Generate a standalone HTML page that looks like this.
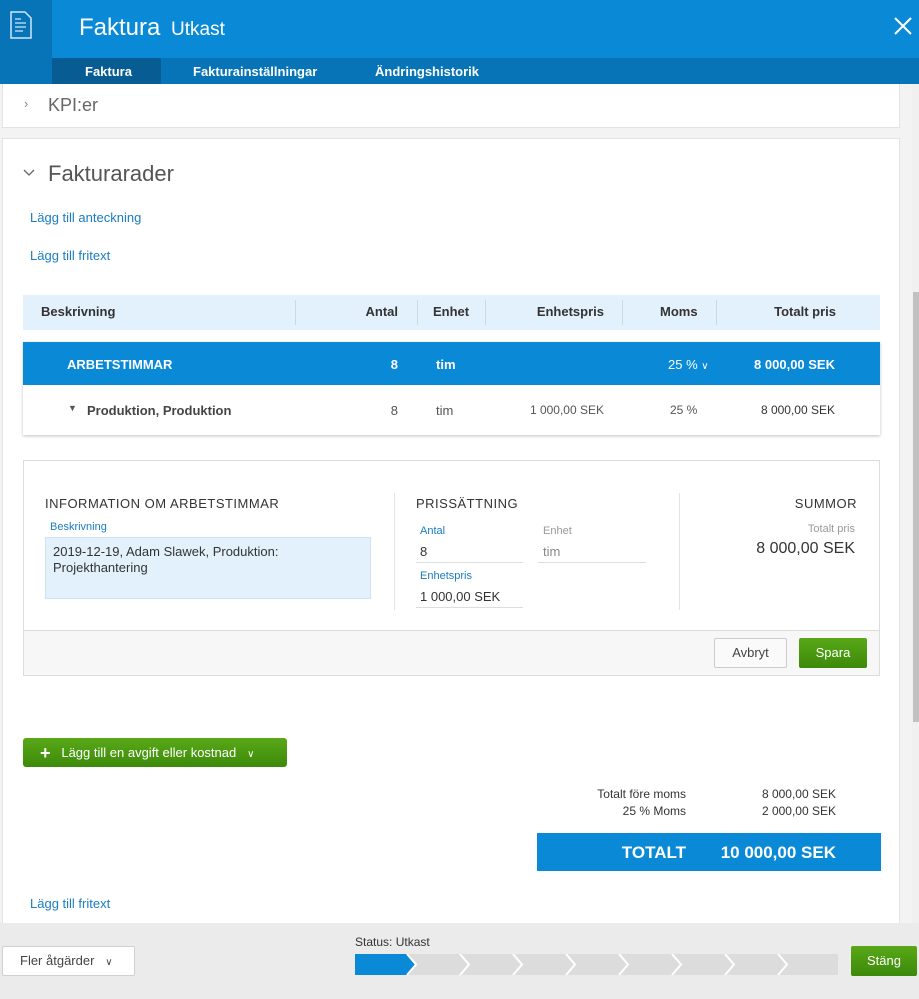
<!DOCTYPE html>
<html><head><meta charset="utf-8"><style>
*{box-sizing:border-box;margin:0;padding:0}
body{width:919px;height:999px;overflow:hidden;background:#f3f3f3;font-family:"Liberation Sans",sans-serif;color:#333;position:relative}
.a{position:absolute}
.lnk{color:#1a7cc1;font-size:13px}
.r{text-align:right}
.hd{font-size:13px;font-weight:bold;color:#333}
</style></head><body>
<div class="a" style="left:0;top:0;width:919px;height:58px;background:#0a8ad6"></div>
<div class="a" style="left:0;top:0;width:52px;height:84px;background:#0774b8"></div>
<svg class="a" style="left:10px;top:11px" width="22" height="28" viewBox="0 0 22 28"><path d="M1 1h14l6 6v20H1z" fill="none" stroke="#cfe6f7" stroke-width="1.5"/><path d="M5 8h6M5 12h11M5 16h11M5 20h8" stroke="#cfe6f7" stroke-width="1.2"/></svg>
<div class="a" style="left:79px;top:14px;color:#fff;font-size:24px">Faktura <span style="font-size:19px;margin-left:4px">Utkast</span></div>
<svg class="a" style="left:893px;top:16px" width="20" height="20"><path d="M2 2L18 18M18 2L2 18" stroke="#fff" stroke-width="2"/></svg>
<div class="a" style="left:52px;top:58px;width:867px;height:26px;background:#0774b8"></div>
<div class="a" style="left:52px;top:58px;width:109px;height:26px;background:#065c93"></div>
<div class="a" style="left:85px;top:64px;color:#fff;font-size:13px;font-weight:bold">Faktura</div>
<div class="a" style="left:193px;top:64px;color:#fff;font-size:13px;font-weight:bold">Fakturainställningar</div>
<div class="a" style="left:375px;top:64px;color:#fff;font-size:13px;font-weight:bold">Ändringshistorik</div>

<div class="a" style="left:2px;top:84px;width:898px;height:44px;background:#fff;border:1px solid #e3e3e3;border-top:none"></div>
<div class="a" style="left:24px;top:96px;color:#888;font-size:13px">›</div>
<div class="a" style="left:48px;top:95px;color:#666;font-size:18px">KPI:er</div>

<div class="a" style="left:2px;top:138px;width:898px;height:790px;background:#fff;border:1px solid #e3e3e3"></div>
<svg class="a" style="left:23px;top:169px" width="12" height="8"><path d="M1 1l5 5 5-5" fill="none" stroke="#666" stroke-width="1.3"/></svg>
<div class="a" style="left:48px;top:161px;color:#555;font-size:22px">Fakturarader</div>
<div class="a lnk" style="left:30px;top:210px">Lägg till anteckning</div>
<div class="a lnk" style="left:30px;top:248px">Lägg till fritext</div>

<div class="a" style="left:23px;top:295px;width:857px;height:35px;background:#e3f1fc"></div>
<div class="a hd" style="left:41px;top:304px">Beskrivning</div>
<div class="a" style="left:295px;top:300px;width:1px;height:25px;background:#c9dbe8"></div>
<div class="a hd r" style="left:330px;top:304px;width:68px">Antal</div>
<div class="a" style="left:417px;top:300px;width:1px;height:25px;background:#c9dbe8"></div>
<div class="a hd" style="left:433px;top:304px">Enhet</div>
<div class="a" style="left:485px;top:300px;width:1px;height:25px;background:#c9dbe8"></div>
<div class="a hd r" style="left:500px;top:304px;width:104px">Enhetspris</div>
<div class="a" style="left:622px;top:300px;width:1px;height:25px;background:#c9dbe8"></div>
<div class="a hd" style="left:660px;top:304px">Moms</div>
<div class="a" style="left:716px;top:300px;width:1px;height:25px;background:#c9dbe8"></div>
<div class="a hd r" style="left:740px;top:304px;width:96px">Totalt pris</div>

<div class="a" style="left:23px;top:342px;width:857px;height:93px;background:#fff;box-shadow:0 1px 3px rgba(0,0,0,.25)"></div>
<div class="a" style="left:23px;top:342px;width:857px;height:43px;background:#0a8ad6"></div>
<div class="a" style="left:67px;top:357px;color:#fff;font-size:13px;font-weight:bold">ARBETSTIMMAR</div>
<div class="a r" style="left:360px;top:357px;width:38px;color:#fff;font-size:13px;font-weight:bold">8</div>
<div class="a" style="left:436px;top:357px;color:#fff;font-size:13px;font-weight:bold">tim</div>
<div class="a" style="left:668px;top:357px;color:#fff;font-size:13px">25 % <span style="font-size:10px">∨</span></div>
<div class="a r" style="left:720px;top:357px;width:115px;color:#fff;font-size:13px;font-weight:bold">8 000,00 SEK</div>
<div class="a" style="left:68px;top:403px;color:#555;font-size:9px">▼</div>
<div class="a" style="left:87px;top:403px;font-size:13px;font-weight:bold;color:#444">Produktion, Produktion</div>
<div class="a r" style="left:360px;top:403px;width:38px;font-size:13px;color:#555">8</div>
<div class="a" style="left:436px;top:403px;font-size:13px;color:#555">tim</div>
<div class="a r" style="left:500px;top:403px;width:104px;font-size:12px;color:#555">1 000,00 SEK</div>
<div class="a" style="left:670px;top:403px;font-size:12px;color:#555">25 %</div>
<div class="a r" style="left:720px;top:403px;width:115px;font-size:12px;color:#333">8 000,00 SEK</div>

<div class="a" style="left:23px;top:460px;width:857px;height:216px;border:1px solid #dcdcdc;background:#fff"></div>
<div class="a" style="left:24px;top:630px;width:855px;height:45px;background:#f7f7f7;border-top:1px solid #dcdcdc"></div>
<div class="a" style="left:45px;top:496px;font-size:13px;letter-spacing:.5px;color:#333">INFORMATION OM ARBETSTIMMAR</div>
<div class="a lnk" style="left:50px;top:521px;font-size:11px">Beskrivning</div>
<div class="a" style="left:45px;top:537px;width:326px;height:62px;background:#e3f1fc;border:1px solid #cfe3f2;padding:6px 7px;font-size:13px;line-height:16px;color:#333">2019-12-19, Adam Slawek, Produktion: Projekthantering</div>
<div class="a" style="left:394px;top:493px;width:1px;height:117px;background:#e3e3e3"></div>
<div class="a" style="left:416px;top:496px;font-size:13px;letter-spacing:.5px">PRISSÄTTNING</div>
<div class="a lnk" style="left:420px;top:525px;font-size:11px">Antal</div>
<div class="a" style="left:420px;top:544px;font-size:13px">8</div>
<div class="a" style="left:416px;top:562px;width:107px;height:1px;background:#ddd"></div>
<div class="a" style="left:543px;top:525px;font-size:11px;color:#999">Enhet</div>
<div class="a" style="left:543px;top:544px;font-size:13px;color:#888">tim</div>
<div class="a" style="left:538px;top:562px;width:108px;height:1px;background:#ddd"></div>
<div class="a lnk" style="left:420px;top:570px;font-size:11px">Enhetspris</div>
<div class="a" style="left:420px;top:589px;font-size:13px">1 000,00 SEK</div>
<div class="a" style="left:416px;top:607px;width:107px;height:1px;background:#ddd"></div>
<div class="a" style="left:679px;top:493px;width:1px;height:117px;background:#e3e3e3"></div>
<div class="a r" style="left:700px;top:496px;width:157px;font-size:13px;letter-spacing:.5px">SUMMOR</div>
<div class="a r" style="left:700px;top:523px;width:155px;font-size:11px;color:#999">Totalt pris</div>
<div class="a r" style="left:700px;top:540px;width:155px;font-size:16px">8 000,00 SEK</div>
<div class="a" style="left:714px;top:638px;width:73px;height:30px;border:1px solid #ccc;border-radius:2px;background:#fafafa;font-size:13px;text-align:center;line-height:28px;color:#444">Avbryt</div>
<div class="a" style="left:799px;top:638px;width:68px;height:30px;border-radius:2px;background:linear-gradient(#5aa818,#3c8a0a);font-size:13px;text-align:center;line-height:30px;color:#fff">Spara</div>

<div class="a" style="left:23px;top:738px;width:264px;height:29px;border-radius:3px;background:linear-gradient(#5aa818,#3c8a0a);color:#fff;font-size:13px;line-height:29px;padding-left:17px"><span style="font-size:18px;font-weight:bold;vertical-align:-2px">+</span>&nbsp;&nbsp; Lägg till en avgift eller kostnad &nbsp; <span style="font-size:10px">∨</span></div>

<div class="a r" style="left:540px;top:787px;width:146px;font-size:12px">Totalt före moms</div>
<div class="a r" style="left:700px;top:787px;width:136px;font-size:12px">8 000,00 SEK</div>
<div class="a r" style="left:540px;top:804px;width:146px;font-size:12px">25 % Moms</div>
<div class="a r" style="left:700px;top:804px;width:136px;font-size:12px">2 000,00 SEK</div>
<div class="a" style="left:537px;top:833px;width:344px;height:38px;background:#0a8ad6"></div>
<div class="a r" style="left:560px;top:843px;width:126px;color:#fff;font-size:17px;font-weight:bold">TOTALT</div>
<div class="a r" style="left:700px;top:843px;width:136px;color:#fff;font-size:17px;font-weight:bold">10 000,00 SEK</div>
<div class="a lnk" style="left:30px;top:896px">Lägg till fritext</div>

<div class="a" style="left:912px;top:84px;width:7px;height:839px;background:#f0f0f0"></div>
<div class="a" style="left:913px;top:292px;width:6px;height:430px;background:#c1c1c1"></div>

<div class="a" style="left:0;top:923px;width:919px;height:76px;background:#ebebeb"></div>
<div class="a" style="left:2px;top:946px;width:133px;height:30px;border:1px solid #d0d0d0;border-radius:2px;background:#fff;font-size:13px;line-height:28px;padding-left:17px;color:#444">Fler åtgärder &nbsp; <span style="font-size:10px">∨</span></div>
<div class="a" style="left:355px;top:935px;font-size:12px;color:#333">Status: Utkast</div>
<svg class="a" style="left:355px;top:954px" width="483" height="21">
<rect x="0" y="0" width="483" height="21" fill="#dcdcdc"/>
<path d="M0 0H52L61 10.5 52 21H0z" fill="#0a8ad6"/>
<g fill="none" stroke="#fff" stroke-width="2"><path d="M52 0l9 10.5L52 21"/><path d="M105 0l9 10.5L105 21"/><path d="M158 0l9 10.5L158 21"/><path d="M211 0l9 10.5L211 21"/><path d="M264 0l9 10.5L264 21"/><path d="M317 0l9 10.5L317 21"/><path d="M370 0l9 10.5L370 21"/><path d="M423 0l9 10.5L423 21"/></g>
</svg>
<div class="a" style="left:851px;top:946px;width:66px;height:30px;border-radius:2px;background:linear-gradient(#5aa818,#3c8a0a);color:#fff;font-size:13px;text-align:center;line-height:30px">Stäng</div>
</body></html>
